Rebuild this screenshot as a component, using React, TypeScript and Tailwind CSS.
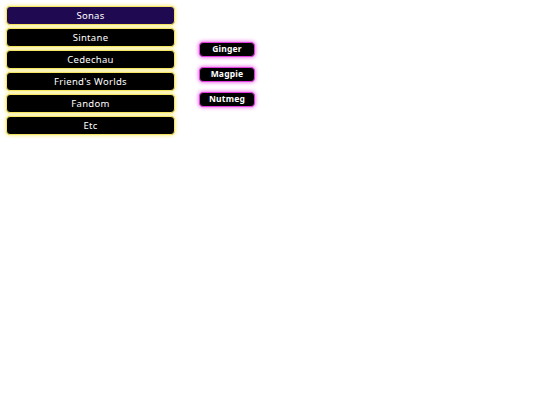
const sections = ['Sonas', 'Sintane', 'Cedechau', "Friend's Worlds", 'Fandom', 'Etc'];
const characters = ['Ginger', 'Magpie', 'Nutmeg'];

export default function App() {
  return (
    <div className="flex items-start gap-[24px] p-[6px] font-['Noto_Sans',sans-serif] text-white">
      {/* ── Section tabs ── */}
      <nav className="flex w-[169px] flex-col gap-[3px]">
        {sections.map((name, i) => (
          <button
            key={name}
            className={`h-[19px] rounded-[4px] border border-[#f5e663] text-[9.5px] leading-none tracking-[0.3px] text-white shadow-[0_0_4px_#f5e663] ${
              i === 0 ? 'bg-[#1f0a52]' : 'bg-black'
            }`}
          >
            {name}
          </button>
        ))}
      </nav>

      {/* ── Character list ── */}
      <div className="mt-[36px] flex flex-col gap-[10px]">
        {characters.map((name) => (
          <button
            key={name}
            className="h-[15px] w-[56px] rounded-[4px] border border-[#e23de0] bg-black text-[8.5px] leading-none font-bold tracking-[0.2px] text-white shadow-[0_0_4px_#e23de0]"
          >
            {name}
          </button>
        ))}
      </div>
    </div>
  );
}
